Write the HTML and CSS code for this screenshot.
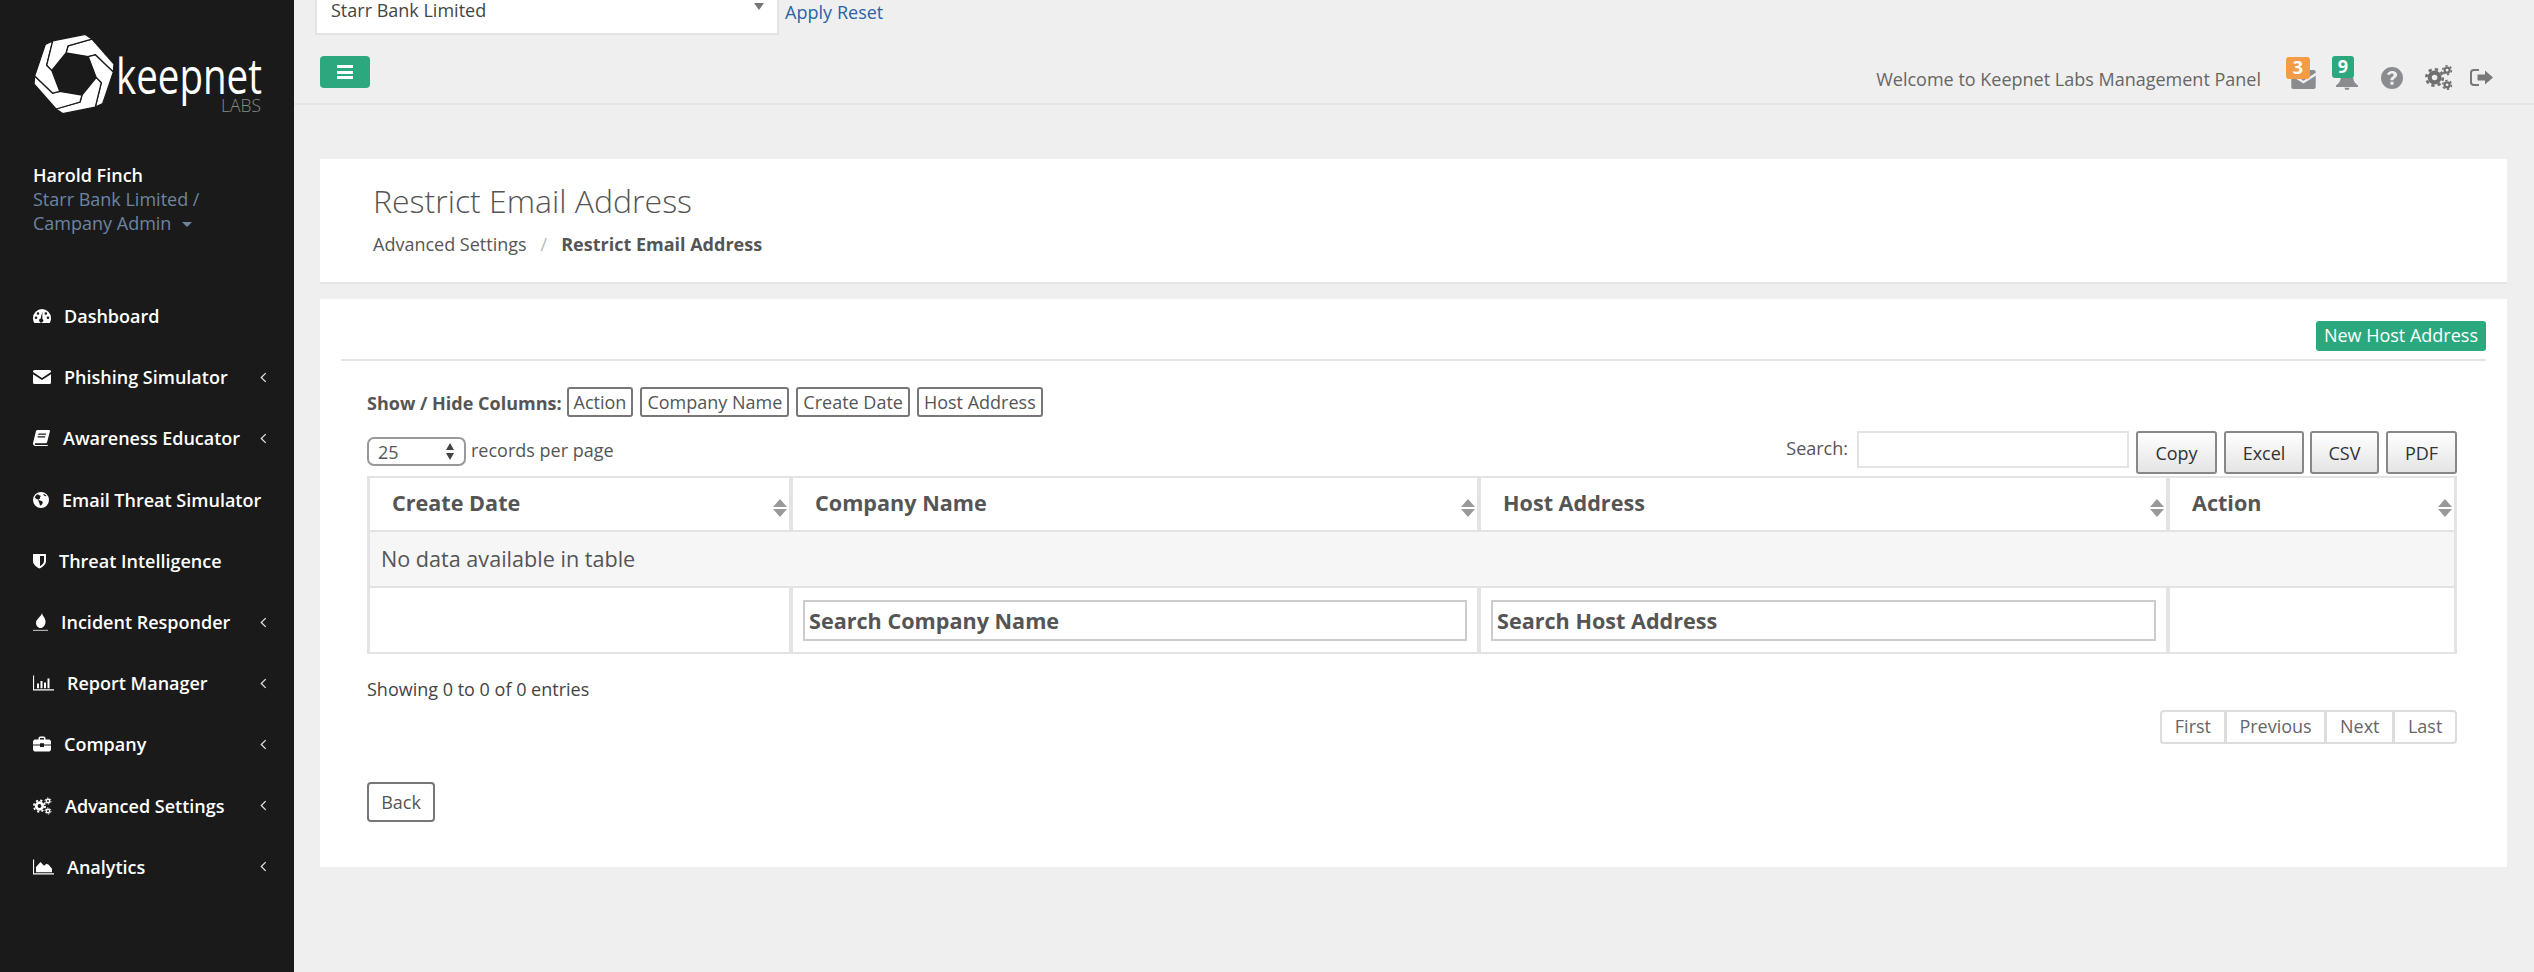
FILE: index.html
```html
<!DOCTYPE html>
<html>
<head>
<meta charset="utf-8">
<title>Restrict Email Address</title>
<link rel="stylesheet" href="styles.css">
</head>
<body>
<svg class="defs" width="0" height="0">
	<symbol id="i-envelope" viewBox="0 0 18 14"><path fill="currentColor" d="M0 1.500A1.500 1.500 0 0 1 1.500 0h15A1.500 1.500 0 0 1 18 1.500v.6L9 8 0 2.100zM0 4.300l9 5.700 9-5.700v8.200a1.500 1.500 0 0 1-1.500 1.500h-15A1.500 1.500 0 0 1 0 12.500z"/></symbol>
	<symbol id="i-gauge" viewBox="0 0 18 14"><path fill="currentColor" fill-rule="evenodd" d="M9 0a9 9 0 0 1 9 9c0 2-.5 3.700-1.300 5H1.300C.5 12.700 0 11 0 9a9 9 0 0 1 9-9zM3 7.500a1.300 1.300 0 1 0 0 2.600 1.300 1.300 0 0 0 0-2.600zM5 3.200a1.300 1.300 0 1 0 0 2.600 1.300 1.300 0 0 0 0-2.600zM12.800 3.200a1.300 1.300 0 1 0 0 2.600 1.300 1.300 0 0 0 0-2.600zM15 7.500a1.300 1.300 0 1 0 0 2.600 1.300 1.300 0 0 0 0-2.600zM9.300 2.500L7.700 9.600a2 2 0 1 0 1.700.3z"/></symbol>
	<symbol id="i-book" viewBox="0 0 17 16"><path fill="currentColor" fill-rule="evenodd" d="M4 0h12.500l.5 1-3 11.500-.8.7H2.800c-.8 0-1.100.5-1 1 .1.400.5.7 1 .7h11.400l.5-.5v1.600H2.500C1 16 0 15 0 13.500c0-.5.1-1 .3-1.500L3 1zM5.500 3.500l-.3 1.200h7.600l.3-1.200zM4.800 6.300l-.3 1.200h7.600l.3-1.200z"/></symbol>
	<symbol id="i-globe" viewBox="0 0 16 16"><path fill="currentColor" fill-rule="evenodd" d="M8 0a8 8 0 1 1 0 16A8 8 0 0 1 8 0zM4 2.500C3 3.300 2.200 4.300 1.800 5.500c.8.600 1.400 1.600 2.400 1.800.9.200 1.500 1 1.400 2 .1 1 .9 1.300.9 2.500 0 .8.400 1.500 1 2 .8-.8 2-1.700 2.200-3 .3-1-.7-1.700-1.700-2-1-.4-2.200-.3-2.600-1.300.4-.7 1.500-.5 1.800-1.300C6.500 5 7.500 4.800 8 4c-.6-.5-1.600-.3-2-1-.2-.5-1.500-.8-2-.5zM10.500 2c-.3.600 0 1.300.7 1.500.5.800 1.500 1 2.300.5-.7-1-1.800-1.700-3-2z"/></symbol>
	<symbol id="i-shield" viewBox="0 0 13 15"><path fill="currentColor" fill-rule="evenodd" d="M0 1l.5-.5h12l.5.5v6.500c0 3.500-3.500 6-6.500 7.500C3.500 13.500 0 11 0 7.500zM7 2.500v10.200c1.800-1 4-2.800 4-5.200V2.500z"/></symbol>
	<symbol id="i-fire" viewBox="0 0 15 18"><path fill="currentColor" d="M9 0c.5 3.200 3.500 4.800 3.500 8.700 0 3.200-2.200 6.300-5 6.300C5 15 3 12.500 3 10 3 6 8 4 9 0z"/><path fill="currentColor" opacity=".65" d="M0 16.800h15V18H0z"/></symbol>
	<symbol id="i-bars" viewBox="0 0 21 15"><path fill="currentColor" d="M0 0h1.100v13.800H21V15H0zM4 8h2v4.800H4zM7.500 5.500h2v7.300h-2zM11 7h2v5.800h-2zM14.500 3h2v9.800h-2z"/></symbol>
	<symbol id="i-case" viewBox="0 0 18 15"><path fill="currentColor" fill-rule="evenodd" d="M5.500 3V1.300L6.800 0h4.400l1.300 1.300V3h4L18 4.500V8h-7V6.700H7V8H0V4.500L1.500 3zM7 1.500V3h4V1.500zM0 9h7v1.500h4V9h7v4.500L16.500 15h-15L0 13.500z"/></symbol>
	<symbol id="i-cogs" viewBox="0 0 19 17">
		<g fill="none" stroke="currentColor">
			<circle cx="6.500" cy="8.500" r="3.300" stroke-width="2.800"/>
			<circle cx="6.500" cy="8.500" r="5.600" stroke-width="1.800" stroke-dasharray="2.200 2.200"/>
			<circle cx="15" cy="3.500" r="1.700" stroke-width="1.500"/>
			<circle cx="15" cy="3.500" r="3" stroke-width="1" stroke-dasharray="1.570 1.570"/>
			<circle cx="15" cy="13.500" r="1.700" stroke-width="1.500"/>
			<circle cx="15" cy="13.500" r="3" stroke-width="1" stroke-dasharray="1.570 1.570"/>
		</g>
	</symbol>
	<symbol id="i-area" viewBox="0 0 21 15"><path fill="currentColor" d="M0 0h1.100v13.800H21V15H0zM3 12.800V7.500L7.500 2.500l3.500 3.700 2.500-2 2.200 1 3.300 4v3.600z"/></symbol>
	<symbol id="i-bell" viewBox="0 0 22 21"><path fill="currentColor" d="M11 0c3.500 0 6 2.500 6 6 0 5 1.500 8 5 10.500V18H0v-1.500C3.500 14 5 11 5 6c0-3.500 2.500-6 6-6zM8.500 18.700h5a2.500 2.300 0 0 1-5 0z"/></symbol>
	<symbol id="i-help" viewBox="0 0 22 22"><path fill="currentColor" fill-rule="evenodd" d="M11 0a11 11 0 1 1 0 22 11 11 0 0 1 0-22zM11 4c-2.600 0-4.300 1.300-5 3.300l2.300 1c.5-1 1.300-1.800 2.500-1.800 1.100 0 1.900.6 1.900 1.400 0 1.800-3.300 1.900-3.300 4.900v.4h3c0-2 3.700-2.200 3.700-5.400C16.100 5.600 13.800 4 11 4zM9.400 14.800v3h3.100v-3z"/></symbol>
	<symbol id="i-exit" viewBox="0 0 23 17"><path fill="currentColor" d="M3.500 0H9v2H4C2.800 2 2 2.800 2 4v9c0 1.200.8 2 2 2h5v2H3.500C1.500 17 0 15.500 0 13.500v-10C0 1.500 1.500 0 3.500 0z"/><path fill="currentColor" d="M15 1.500l8 7-8 7v-4H7.500v-6H15z"/></symbol>
</svg>

<aside class="sidebar">
	<div class="logo">
		<svg class="logo-mark" width="240" height="92" viewBox="0 0 240 92">
			<g transform="translate(44 44)" fill="#fff" stroke="#1a1a1a" stroke-width="1.300" stroke-linejoin="round">
				<polygon id="band" points="-8,-21 -6,-28 18,-35 40,-10 39.300,-1.900 21.250,-19.200 14.200,-17.400"/>
				<use href="#band" transform="rotate(60)"/>
				<use href="#band" transform="rotate(120)"/>
				<use href="#band" transform="rotate(180)"/>
				<use href="#band" transform="rotate(240)"/>
				<use href="#band" transform="rotate(300)"/>
			</g>
			<text class="logo-word" transform="translate(86 64) scale(.77 1)">keepnet</text>
			<text class="logo-labs" transform="translate(191 82) scale(.92 1)">LABS</text>
		</svg>
	</div>
	<div class="user">
		<strong>Harold Finch</strong>
		<span>Starr Bank Limited /</span>
		<span>Campany Admin <i class="caret"></i></span>
	</div>
	<nav class="menu">
		<a class="menu-item"><svg class="ic w18"><use href="#i-gauge"/></svg>Dashboard</a>
		<a class="menu-item"><svg class="ic w18"><use href="#i-envelope"/></svg>Phishing Simulator<svg class="chev" viewBox="0 0 6 10"><path d="M5 1L1 5l4 4"/></svg></a>
		<a class="menu-item"><svg class="ic w17"><use href="#i-book"/></svg>Awareness Educator<svg class="chev" viewBox="0 0 6 10"><path d="M5 1L1 5l4 4"/></svg></a>
		<a class="menu-item"><svg class="ic w16"><use href="#i-globe"/></svg>Email Threat Simulator</a>
		<a class="menu-item"><svg class="ic w13"><use href="#i-shield"/></svg>Threat Intelligence</a>
		<a class="menu-item"><svg class="ic w15"><use href="#i-fire"/></svg>Incident Responder<svg class="chev" viewBox="0 0 6 10"><path d="M5 1L1 5l4 4"/></svg></a>
		<a class="menu-item"><svg class="ic w21"><use href="#i-bars"/></svg>Report Manager<svg class="chev" viewBox="0 0 6 10"><path d="M5 1L1 5l4 4"/></svg></a>
		<a class="menu-item"><svg class="ic w18"><use href="#i-case"/></svg>Company<svg class="chev" viewBox="0 0 6 10"><path d="M5 1L1 5l4 4"/></svg></a>
		<a class="menu-item"><svg class="ic w19"><use href="#i-cogs"/></svg>Advanced Settings<svg class="chev" viewBox="0 0 6 10"><path d="M5 1L1 5l4 4"/></svg></a>
		<a class="menu-item"><svg class="ic w21"><use href="#i-area"/></svg>Analytics<svg class="chev" viewBox="0 0 6 10"><path d="M5 1L1 5l4 4"/></svg></a>
	</nav>
</aside>

<main class="main">
	<div class="filter">
		<div class="company-select">Starr Bank Limited<i class="company-arrow"></i></div>
		<a class="filter-link">Apply</a>
		<a class="filter-link">Reset</a>
	</div>

	<header class="topbar">
		<button class="menu-toggle"><span></span><span></span><span></span></button>
		<div class="topbar-right">
			<span class="welcome">Welcome to Keepnet Labs Management Panel</span>
			<span class="top-icon t-mail"><svg class="mail"><use href="#i-envelope"/></svg><b class="badge orange">3</b></span>
			<span class="top-icon t-bell"><svg class="bell"><use href="#i-bell"/></svg><b class="badge green">9</b></span>
			<span class="top-icon t-help"><svg class="help"><use href="#i-help"/></svg></span>
			<span class="top-icon t-cogs"><svg class="cogs"><use href="#i-cogs"/></svg></span>
			<span class="top-icon t-exit"><svg class="exit"><use href="#i-exit"/></svg></span>
		</div>
	</header>

	<section class="card title-card">
		<h1>Restrict Email Address</h1>
		<div class="crumbs"><span>Advanced Settings</span><i>/</i><b>Restrict Email Address</b></div>
	</section>

	<section class="card list-card">
		<div class="card-tools"><a class="btn-new">New Host Address</a></div>
		<div class="list-body">
			<div class="col-toggle">
				<b>Show / Hide Columns:</b>
				<a>Action</a><a>Company Name</a><a>Create Date</a><a>Host Address</a>
			</div>
			<div class="table-top">
				<div class="length">
					<span class="length-select">25<i class="stepper"></i></span>
					<span>records per page</span>
				</div>
				<div class="search">
					<label>Search:</label>
					<input type="text">
					<button class="b-copy">Copy</button><button class="b-excel">Excel</button><button class="b-csv">CSV</button><button class="b-pdf">PDF</button>
				</div>
			</div>
			<table class="grid">
				<colgroup><col class="c1"><col class="c2"><col class="c3"><col class="c4"></colgroup>
				<thead>
					<tr>
						<th>Create Date<i class="sort"></i></th>
						<th>Company Name<i class="sort"></i></th>
						<th>Host Address<i class="sort"></i></th>
						<th>Action<i class="sort"></i></th>
					</tr>
				</thead>
				<tbody>
					<tr class="empty"><td colspan="4">No data available in table</td></tr>
					<tr class="search-row">
						<td></td>
						<td><input type="text" placeholder="Search Company Name"></td>
						<td><input type="text" placeholder="Search Host Address"></td>
						<td></td>
					</tr>
				</tbody>
			</table>
			<div class="info">Showing 0 to 0 of 0 entries</div>
			<div class="pager"><a>First</a><a>Previous</a><a>Next</a><a>Last</a></div>
			<a class="btn-back">Back</a>
		</div>
	</section>
</main>
</body>
</html>
```

FILE: styles.css
```css
* { margin: 0; padding: 0; box-sizing: border-box; }
html, body { height: 972px; overflow: hidden; }
body { display: flex; background: #fff; font-family: "Open Sans", "Noto Sans", sans-serif; font-size: 18px; color: #555; }
i { font-style: normal; }
.defs { position: absolute; }

/* sidebar */
.sidebar { flex: 0 0 294px; height: 972px; background: #1a1a1a; color: #fff; }
.logo { height: 163px; padding: 30px 0 0 30px; }
.logo-mark { display: block; }
.logo-word { font-family: "Open Sans", sans-serif; font-size: 50px; fill: #fff; }
.logo-labs { font-family: "Open Sans", sans-serif; font-weight: 300; font-size: 19px; fill: #8a8a8a; }
.user { display: flex; flex-direction: column; padding-left: 33px; line-height: 24px; color: #6c85a1; }
.user strong { color: #fff; font-weight: 600; }
.caret { display: inline-block; width: 0; height: 0; margin: 0 0 3px 6px; border: 5px solid transparent; border-top-color: #6c85a1; border-bottom: 0; }

.menu { padding-top: 50.500px; }
.menu-item { display: flex; align-items: center; height: 61.200px; padding: 0 27px 0 33px; font-weight: 600; white-space: nowrap; }
.ic { height: 18px; margin-right: 13px; flex: none; }
.w13 { width: 13px; } .w15 { width: 15px; } .w16 { width: 16px; } .w17 { width: 17px; }
.w18 { width: 18px; } .w19 { width: 19px; } .w21 { width: 21px; }
.chev { width: 7px; height: 11px; margin-left: auto; flex: none; fill: none; stroke: #ddd; stroke-width: 1.200; }

/* top */
.main { flex: 1; margin-right: 2px; height: 972px; background: #efefef; padding-bottom: 40px; }
.filter { display: flex; height: 35px; padding-left: 21px; }
.company-select { position: relative; width: 464px; height: 35px; padding: 0 0 0 14px; background: #fff; border: 2px solid #e3e3e3; border-top: 0; line-height: 21px; color: #444; }
.company-arrow { position: absolute; right: 13px; top: 3px; border: 5px solid transparent; border-top: 7px solid #777; border-bottom: 0; }
.filter-link { margin-left: 6px; line-height: 24px; color: #2a62a8; }
.filter-link + .filter-link { margin-left: 5px; }

.topbar { display: flex; justify-content: space-between; height: 70px; padding: 21px 41px 0 26px; border-bottom: 2px solid #e2e6ea; }
.menu-toggle { display: flex; flex-direction: column; justify-content: center; gap: 2.500px; align-items: center; width: 50px; height: 32px; background: #2ca87f; border: 0; border-radius: 4px; }
.menu-toggle span { width: 16px; height: 3px; background: #fff; }
.topbar-right { display: flex; align-items: center; height: 25px; margin-top: 9px; color: #8a8c8f; }
.welcome { margin: 2px 30px 0 0; line-height: 24px; color: #666; }
.top-icon { position: relative; display: flex; }
.t-mail { margin-right: 20px; margin-top: 4px; }
.t-bell { margin-right: 23px; margin-top: 4px; }
.t-help { margin-right: 22px; }
.t-cogs { margin-right: 17px; }
.mail { width: 25px; height: 19px; }
.bell { width: 22px; height: 21px; }
.help { width: 22px; height: 22px; }
.cogs { width: 28px; height: 25px; color: #6e6f70; }
.exit { width: 23px; height: 17px; color: #77787a; }
.badge { position: absolute; top: -13px; left: -5px; width: 24px; height: 22px; border-radius: 3px; color: #fff; font-size: 18px; font-weight: 700; line-height: 20px; text-align: center; }
.t-bell .badge { left: -4px; width: 22px; }
.orange { background: #f39c45; }
.green { background: #2ca87f; }

/* cards */
.card { margin: 0 27px 0 26px; background: #fff; }
.title-card { height: 125px; margin-top: 54px; padding: 22px 0 0 53px; border-bottom: 2px solid #e4e4e4; }
.title-card h1 { font-size: 32px; font-weight: 300; line-height: 40px; color: #555; }
.crumbs { margin-top: 11px; line-height: 24px; }
.crumbs i { margin: 0 14px; color: #bbb; }
.crumbs b { font-weight: 700; }

.list-card { height: 568px; margin-top: 15px; }
.card-tools { display: flex; justify-content: flex-end; margin: 0 21px; padding-top: 22px; height: 62px; border-bottom: 2px solid #e2e6ea; }
.btn-new { height: 30px; padding: 0 8px; background: #2ca87f; border-radius: 3px; color: #fff; line-height: 29px; }
.list-body { padding: 26px 50px 0 47px; }

.col-toggle { display: flex; align-items: center; gap: 7px; height: 30px; }
.col-toggle b { margin-right: -2px; margin-top: 2px; }
.col-toggle a { height: 30px; padding: 0 5px; border: 2px solid #777; border-radius: 3px; line-height: 26px; }

.table-top { display: flex; justify-content: space-between; height: 43px; margin: 14px 0 2px; }
.length { display: flex; gap: 5px; height: 29px; margin-top: 6px; line-height: 27px; }
.length-select { position: relative; width: 99px; height: 29px; padding-left: 9px; border: 2px solid #999; border-radius: 7px; }
.stepper { position: absolute; right: 8px; top: 4px; width: 10px; height: 17px; }
.stepper::before, .stepper::after { content: ""; position: absolute; left: 0; border: 4.500px solid transparent; }
.stepper::before { top: 0; border-top: 0; border-bottom: 7px solid #444; }
.stepper::after { bottom: 0; border-bottom: 0; border-top: 7px solid #444; }

.search { display: flex; align-items: flex-start; }
.search label { margin-right: 9px; line-height: 34px; }
.search input { width: 272px; height: 37px; margin-right: 7px; border: 2px solid #e4e4e4; background: #fff; outline: 0; }
.search button { height: 43px; margin-right: 7px; background: linear-gradient(#fff, #e4e4e4); border: 2px solid #888; border-radius: 3px; font: 18px "Open Sans", sans-serif; color: #333; }
.search .b-copy { width: 81px; }
.search .b-excel { width: 80px; margin-right: 6px; }
.search .b-csv { width: 69px; }
.search .b-pdf { width: 71px; margin-right: 0; }

.grid { width: 2088px; table-layout: fixed; border-collapse: separate; border-spacing: 0; border-top: 2px solid #e3e3e3; border-left: 1px solid #e3e3e3; border-right: 1px solid #e3e3e3; }
.c1 { width: 423px; } .c2 { width: 688px; } .c3 { width: 689px; } .c4 { width: 288px; }
.grid th, .grid td { border: 2px solid #e3e3e3; border-width: 0 2px 2px; }
.grid th { position: relative; height: 54px; padding: 0 0 4px 22px; text-align: left; font-size: 21.600px; font-weight: 700; }
.sort { position: absolute; right: 2px; top: 21px; width: 14px; height: 18px; }
.sort::before, .sort::after { content: ""; position: absolute; left: 0; border: 7px solid transparent; }
.sort::before { top: 0; border-top: 0; border-bottom: 8px solid #999; }
.sort::after { bottom: 0; border-bottom: 0; border-top: 8px solid #999; }
.empty td { height: 56px; padding: 0 0 2px 11px; background: #f6f6f6; font-size: 21.600px; }
.search-row td { height: 66px; padding: 0 10px; }
.search-row input { display: block; width: 100%; height: 41px; padding: 0 4px; border: 2px solid #ccc; background: #fff; font: 700 21.600px "Open Sans", sans-serif; color: #555; }
.search-row input::placeholder { color: #555; opacity: 1; }

.info { margin-top: 23px; line-height: 24px; color: #444; }
.pager { display: flex; justify-content: flex-end; margin-top: 9px; color: #666; }
.pager a { height: 34px; padding: 0 12.700px; border: 2px solid #ddd; border-left-width: 0; border-right-width: 3px; line-height: 29px; }
.pager a:first-child { border-left-width: 2px; border-radius: 4px 0 0 4px; }
.pager a:last-child { border-right-width: 2px; border-radius: 0 4px 4px 0; }
.btn-back { display: block; width: 68px; height: 40px; margin-top: 38px; border: 2px solid #777; border-radius: 4px; line-height: 36px; text-align: center; }
```
